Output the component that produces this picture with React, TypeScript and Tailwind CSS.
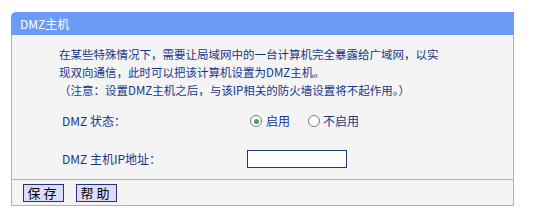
import React from 'react';

const font = { fontFamily: '"Noto Sans CJK SC", "DejaVu Sans", sans-serif' };

export default function App() {
  return (
    <div className="w-[545px] h-[217px] bg-white pt-[12px] pl-[11px]" style={font}>
      <div className="w-[503px]">
        {/* Title bar */}
        <div className="h-[23px] bg-[#6a9cf6] rounded-tl-[5px] flex items-center pl-[9px] text-white text-[12px]">
          DMZ主机
        </div>

        {/* Body */}
        <div className="border-x border-[#f0a55c] bg-[#f4f4f4] h-[144px] text-[12px] text-[#17368a] pl-[47px] pt-[10px]">
          <div className="leading-[18px] w-[420px] text-[11.5px]">
            <p>在某些特殊情况下，需要让局域网中的一台计算机完全暴露给广域网，以实</p>
            <p>现双向通信，此时可以把该计算机设置为DMZ主机。</p>
            <p>（注意：设置DMZ主机之后，与该IP相关的防火墙设置将不起作用。）</p>
          </div>

          <div className="flex items-center mt-[12px] h-[20px]">
            <span className="w-[191px] pl-[3px]">DMZ 状态：</span>
            <label className="flex items-center">
              <span className="w-[12px] h-[12px] rounded-full border border-[#6c7a8c] bg-white flex items-center justify-center">
                <span className="w-[5px] h-[5px] rounded-full bg-[#3fae3f]" />
              </span>
              <span className="ml-[4px]">启用</span>
            </label>
            <label className="flex items-center ml-[18px]">
              <span className="w-[12px] h-[12px] rounded-full border border-[#6c7a8c] bg-white" />
              <span className="ml-[3px]">不启用</span>
            </label>
          </div>

          <div className="flex items-center mt-[18px] h-[20px]">
            <span className="w-[188px] pl-[3px]">DMZ 主机IP地址：</span>
            <input
              type="text"
              className="w-[100px] h-[18px] border border-[#1c3a7a] bg-white outline-none"
            />
          </div>
        </div>

        {/* Footer */}
        <div className="h-[27px] border border-[#f0a55c] bg-[#f4f4f4] flex items-center gap-[12px] pl-[11px]">
          <button className="w-[41px] h-[18px] bg-[#dcdcfa] border border-[#22357a] text-black text-[13px] leading-none tracking-[3px]">
            保存
          </button>
          <button className="w-[41px] h-[18px] bg-[#dcdcfa] border border-[#22357a] text-black text-[13px] leading-none tracking-[3px]">
            帮助
          </button>
        </div>
      </div>
    </div>
  );
}
